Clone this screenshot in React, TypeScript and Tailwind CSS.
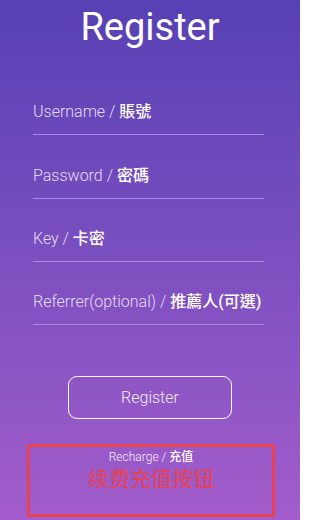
export default function App() {
  const fields = [
    { en: 'Username', zh: '賬號' },
    { en: 'Password', zh: '密碼' },
    { en: 'Key', zh: '卡密' },
    { en: 'Referrer(optional)', zh: '推薦人(可選)' },
  ]

  return (
    <div
      className="w-[300px] h-[520px] overflow-hidden bg-gradient-to-b from-[#5640b4] to-[#a35ccb] text-white"
      style={{ fontFamily: 'Roboto, "Noto Sans CJK TC", sans-serif' }}
    >
      <h1 className="pt-[5px] text-center text-[38px] leading-[44px] font-normal">Register</h1>

      <div className="mt-[23px] pl-[33px] pr-[36px]">
        {fields.map((f) => (
          <div key={f.en} className="h-[63.3px] border-b border-[#a98ae0] flex items-end pb-[12px]">
            <span className="text-[16px] leading-[20px] font-light text-[#e6dcf8]">
              {f.en} / <span className="font-medium text-white">{f.zh}</span>
            </span>
          </div>
        ))}
      </div>

      <div className="flex justify-center mt-[51px]">
        <button className="w-[164px] h-[43px] rounded-[9px] border border-white text-[16px] font-light text-[#f3ecfc]">
          Register
        </button>
      </div>

      {/* recharge placeholder box */}
      <div
        className="mt-[25px] ml-[27px] w-[248px] h-[73px] border-[3px] border-[#e8414f] flex flex-col items-center pt-[2px]"
        style={{ fontFamily: 'Roboto, "Noto Sans CJK SC", sans-serif' }}
      >
        <span className="text-[12px] leading-[16px] font-light text-[#f3ecfc]">
          Recharge / <span className="font-medium text-white">充值</span>
        </span>
        <span className="text-[21px] leading-[28px] text-[#e8414f]">续费充值按钮</span>
      </div>
    </div>
  )
}
